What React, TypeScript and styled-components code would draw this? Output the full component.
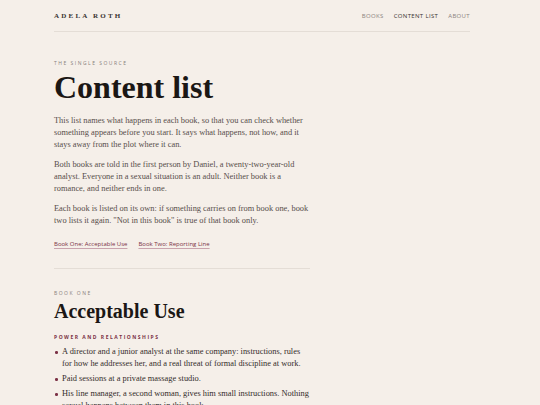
import { ReactElement } from 'react'
import styled, { createGlobalStyle } from 'styled-components'

const colors = {
  page: '#f5efe9',
  ink: '#1b1715',
  body: '#574e4a',
  dark: '#332c29',
  muted: '#8a827d',
  rule: '#e4ddd6',
  accent: '#7b3146'
}

const GlobalStyle = createGlobalStyle`
  html, body {
    margin: 0;
    padding: 0;
    background: ${colors.page};
  }
  body {
    font-family: 'Liberation Serif', Georgia, serif;
    color: ${colors.body};
  }
`

const Page = styled.div`
  padding: 0 70px 0 54px;
`

const Header = styled.header`
  display: flex;
  justify-content: space-between;
  align-items: center;
  height: 31px;
  border-bottom: 1px solid ${colors.rule};
`

const Brand = styled.div`
  font-family: 'Liberation Serif', serif;
  font-weight: bold;
  font-size: 7px;
  letter-spacing: 2.2px;
  color: #3a3431;
`

const Nav = styled.nav`
  display: flex;
  gap: 10px;
`

const NavLink = styled.a<{ active?: boolean }>`
  font-family: 'Open Sans', sans-serif;
  font-size: 6px;
  letter-spacing: 0.35px;
  text-transform: uppercase;
  color: ${({ active }) => (active ? '#3a3431' : colors.muted)};
  text-decoration: none;
`

const Main = styled.main`
  width: 256px;
  padding-top: 28px;
`

const Eyebrow = styled.div<{ accent?: boolean }>`
  font-family: 'Open Sans', sans-serif;
  font-size: 5px;
  line-height: 7px;
  letter-spacing: 1.5px;
  text-transform: uppercase;
  font-weight: ${({ accent }) => (accent ? 700 : 400)};
  color: ${({ accent }) => (accent ? colors.accent : colors.muted)};
`

const Title = styled.h1<{ small?: boolean }>`
  font-family: 'Liberation Serif', serif;
  font-weight: bold;
  font-size: ${({ small }) => (small ? '20px' : '32px')};
  line-height: ${({ small }) => (small ? '24px' : '36px')};
  color: ${colors.ink};
  margin: ${({ small }) => (small ? '2px 0 11px' : '2px 0 10px')};
`

const Para = styled.p`
  font-size: 8.4px;
  line-height: 12px;
  margin: 0 0 8px;
`

const Links = styled.div`
  display: flex;
  gap: 11px;
  margin-top: 13px;
`

const TocLink = styled.a`
  font-family: 'Open Sans', sans-serif;
  font-size: 6px;
  color: ${colors.accent};
  text-decoration: underline;
  text-decoration-color: #c9a3ad;
  text-underline-offset: 1.5px;
`

const Divider = styled.hr`
  border: 0;
  border-top: 1px solid ${colors.rule};
  margin: 20px 0 21px;
`

const List = styled.ul`
  list-style: none;
  margin: 5px 0 0;
  padding: 0;
`

const Item = styled.li`
  position: relative;
  padding-left: 8px;
  font-size: 8.4px;
  line-height: 12px;
  margin-bottom: 3px;
  color: ${colors.dark};

  &::before {
    content: '';
    position: absolute;
    left: 1px;
    top: 5px;
    width: 2.5px;
    height: 2.5px;
    border-radius: 50%;
    background: ${colors.accent};
  }
`

const items = [
  'A director and a junior analyst at the same company: instructions, rules for how he addresses her, and a real threat of formal discipline at work.',
  'Paid sessions at a private massage studio.',
  'His line manager, a second woman, gives him small instructions. Nothing sexual happens between them in this book.'
]

export default function App(): ReactElement {
  return (
    <Page>
      <GlobalStyle />
      <Header>
        <Brand>ADELA ROTH</Brand>
        <Nav>
          <NavLink>Books</NavLink>
          <NavLink active>Content list</NavLink>
          <NavLink>About</NavLink>
        </Nav>
      </Header>
      <Main>
        <Eyebrow>The single source</Eyebrow>
        <Title>Content list</Title>
        <Para>
          This list names what happens in each book, so that you can check whether
          something appears before you start. It says what happens, not how, and it
          stays away from the plot where it can.
        </Para>
        <Para>
          Both books are told in the first person by Daniel, a twenty-two-year-old
          analyst. Everyone in a sexual situation is an adult. Neither book is a
          romance, and neither ends in one.
        </Para>
        <Para>
          Each book is listed on its own: if something carries on from book one, book
          two lists it again. "Not in this book" is true of that book only.
        </Para>
        <Links>
          <TocLink>Book One: Acceptable Use</TocLink>
          <TocLink>Book Two: Reporting Line</TocLink>
        </Links>
        <Divider />
        <Eyebrow>Book one</Eyebrow>
        <Title small>Acceptable Use</Title>
        <Eyebrow accent>Power and relationships</Eyebrow>
        <List>
          {items.map((text) => (
            <Item key={text}>{text}</Item>
          ))}
        </List>
      </Main>
    </Page>
  )
}
